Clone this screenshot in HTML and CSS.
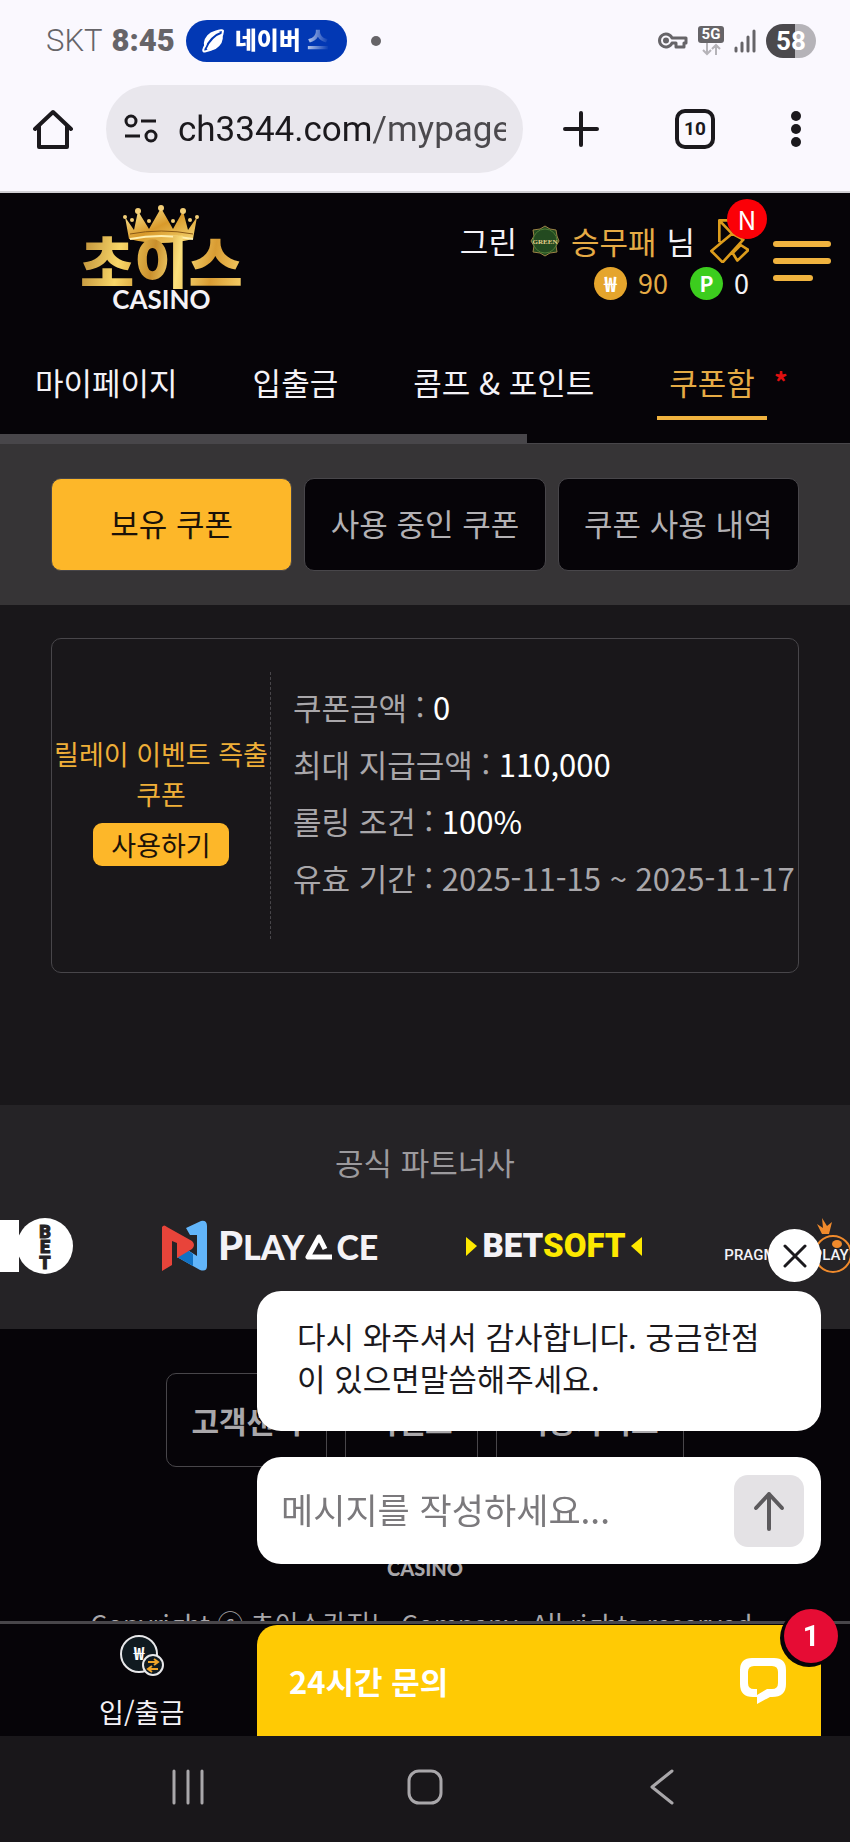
FILE: index.html
```html
<!DOCTYPE html>
<html lang="ko">
<head>
  <meta charset="UTF-8" />
  <meta name="viewport" content="width=device-width, initial-scale=1.0"/>
  <title>초이스 카지노 - 쿠폰함</title>
  <link rel="stylesheet" href="styles.css">
</head>
<body>
  <!-- Phone status + browser toolbar -->
  <div class="browser">
    <div class="status-bar">
      <span class="carrier">SKT</span>
      <span class="clock">8:45</span>
      <span class="now-pill">
        <svg width="24" height="24" viewBox="0 0 24 24">
          <ellipse cx="12.500" cy="12" rx="11" ry="8" transform="rotate(-48 12 12)" fill="#fff"/>
          <path d="M4 21C7 13 13 6 22 3" fill="none" stroke="#0238b4" stroke-width="2"/>
          <path d="M5 15Q0 23 4 22.500Q9 22 14 18M14 3Q22 0 22 2Q22 6 19 10" fill="none" stroke="#fff" stroke-width="2"/>
        </svg>
        <span class="now-text">네이버 스</span>
      </span>
      <span class="notice-dot"></span>
      <div class="status-icons">
        <svg width="30" height="20" viewBox="0 0 30 20" fill="none" stroke="#666468" stroke-width="3">
          <path d="M14 7H28V12H26V16H18V12H14A6.500 6.500 0 1 1 14 7Z" stroke-linejoin="round"/>
          <circle cx="8" cy="9.500" r="1.500"/>
        </svg>
        <span class="network">
          <b>5G</b>
          <svg width="20" height="13" viewBox="0 0 20 13" fill="none" stroke="#b5b3b8" stroke-width="2">
            <path d="M6 0V11M2 7L6 11L10 7M15 12V2M11 6L15 2L19 6"/>
          </svg>
        </span>
        <svg width="22" height="24" viewBox="0 0 22 24" stroke="#666468" stroke-width="3" stroke-linecap="round">
          <path d="M2 22V19M8 22V14M14 22V8M20 22V2"/>
        </svg>
        <span class="battery">58</span>
      </div>
    </div>

    <div class="toolbar">
      <button class="icon-btn" aria-label="홈">
        <svg width="40" height="40" viewBox="0 0 40 40" fill="none" stroke="#1b191d" stroke-width="4" stroke-linejoin="round" stroke-linecap="round">
          <path d="M2 20L20 3L38 20M6 17V38H34V17"/>
        </svg>
      </button>
      <div class="address">
        <svg width="34" height="30" viewBox="0 0 34 30" fill="none" stroke="#1b191d" stroke-width="3">
          <circle cx="7" cy="7" r="5"/><path d="M17 7H32M1 22H16"/><circle cx="27" cy="22" r="5"/>
        </svg>
        <input class="url" type="text" aria-label="주소" value="ch3344.com/mypage" readonly>
      </div>
      <div class="toolbar-actions">
        <button class="icon-btn" aria-label="새 탭">
          <svg width="36" height="36" viewBox="0 0 36 36" stroke="#1b191d" stroke-width="4" stroke-linecap="round">
            <path d="M18 2V34M2 18H34"/>
          </svg>
        </button>
        <button class="icon-btn tab-count">10</button>
        <button class="icon-btn" aria-label="메뉴">
          <svg width="10" height="36" viewBox="0 0 10 36" fill="#1b191d">
            <circle cx="5" cy="5" r="5"/><circle cx="5" cy="18" r="5"/><circle cx="5" cy="31" r="5"/>
          </svg>
        </button>
      </div>
    </div>
  </div>

  <!-- Site header -->
  <header class="header">
    <div class="header-top">
      <a class="logo" href="#">
        <svg class="crown" width="76" height="38" viewBox="0 0 76 38">
          <defs>
            <linearGradient id="gold" x1="0" y1="0" x2="1" y2="1">
              <stop offset="0" stop-color="#fff0a0"/>
              <stop offset="0.500" stop-color="#d99a2b"/>
              <stop offset="1" stop-color="#f8dc7a"/>
            </linearGradient>
          </defs>
          <path d="M6 34L2 12L11 25L15 6L26 24L38 3L50 24L60 6L65 25L74 12L70 34Q38 42 6 34Z" fill="url(#gold)"/>
          <g fill="#f3cf78">
            <circle cx="2" cy="12" r="2"/><circle cx="15" cy="6" r="3"/><circle cx="38" cy="3" r="3"/><circle cx="60" cy="6" r="3"/><circle cx="74" cy="12" r="2"/>
            <circle cx="9" cy="15" r="2"/><circle cx="26" cy="16" r="2"/><circle cx="50" cy="16" r="2"/><circle cx="67" cy="15" r="2"/>
          </g>
          <path d="M7 29Q38 23 70 29" fill="none" stroke="#8a5a16" stroke-width="1"/>
          <path d="M7 34Q38 28 70 34" fill="none" stroke="#fff0b0" stroke-width="2"/>
        </svg>
        <span class="logo-name">초이스</span>
        <span class="logo-sub">CASINO</span>
      </a>

      <div class="user">
        <div class="user-row">
          <span>그린</span>
          <svg class="level" width="30" height="32" viewBox="0 0 30 32">
            <path d="M15 1L20 4L26 5L27 11L29 16L26 21L27 27L20 28L15 31L10 28L3 27L4 21L1 16L4 11L3 5L10 4Z" fill="#234a20" stroke="#9b8345" stroke-width="1"/>
            <circle cx="15" cy="16" r="12" fill="none" stroke="#4f7c35" stroke-width="1"/>
            <text x="15" y="19" text-anchor="middle" font-family="Liberation Serif, serif" font-size="7" font-weight="bold" fill="#e6cf8c">GREEN</text>
          </svg>
          <span class="gold">승무패</span>
          <span class="nim">님</span>
          <a class="coupon-link" href="#" aria-label="쿠폰">
            <svg width="39" height="44" viewBox="0 0 117 132" fill="none" stroke="#dc9c1c" stroke-width="8" stroke-linejoin="round">
              <path d="M28 70V4H62L102 50M28 4L66 44M66 44L4 96L38 130L100 62ZM68 102L92 78L115 93L82 125Z"/>
            </svg>
            <span class="new-badge">N</span>
          </a>
        </div>
        <div class="user-row balance">
          <i class="coin">₩</i><span class="gold">90</span>
          <i class="coin point">P</i><span>0</span>
        </div>
      </div>

      <button class="hamburger" aria-label="전체 메뉴"><span></span><span></span><span></span></button>
    </div>

    <nav class="main-nav">
      <a href="#">마이페이지</a>
      <a href="#">입출금</a>
      <a href="#">콤프 &amp; 포인트</a>
      <a href="#" class="active">쿠폰함<sup>*</sup></a>
    </nav>
    <div class="nav-scroll"></div>
  </header>

  <main>
    <div class="tabs">
      <button class="tab active">보유 쿠폰</button>
      <button class="tab">사용 중인 쿠폰</button>
      <button class="tab">쿠폰 사용 내역</button>
    </div>

    <section class="coupons">
      <div class="coupon">
        <div class="coupon-side">
          <p>릴레이 이벤트 즉출 쿠폰</p>
          <button class="use-btn">사용하기</button>
        </div>
        <ul class="coupon-info">
          <li>쿠폰금액 : <b>0</b></li>
          <li>최대 지급금액 : <b>110,000</b></li>
          <li>롤링 조건 : <b>100%</b></li>
          <li>유효 기간 : 2025-11-15 ~ 2025-11-17</li>
        </ul>
      </div>
    </section>

    <!-- Partners -->
    <section class="partners">
      <h2>공식 파트너사</h2>
      <div class="partner-row">
        <svg width="74" height="56" viewBox="0 0 74 56">
          <path d="M0 2H19V54H0Z" fill="#fff"/>
          <circle cx="45" cy="28" r="28" fill="#fff"/>
          <g fill="#252326" stroke="#252326" stroke-width="1" font-family="Roboto, sans-serif" font-size="18" font-weight="900" text-anchor="middle">
            <text x="45" y="20">B</text><text x="45" y="35">E</text><text x="45" y="51">T</text>
          </g>
        </svg>
        <div class="playace">
          <svg width="46" height="52" viewBox="0 0 46 52">
            <path d="M24 8L39 1Q45 0 45 6V46Q45 52 38 50L15 37L24 29L35 36V15L28 15Z" fill="#62b5fa"/>
            <path d="M15 37L24 29L31 34V46Z" fill="#1272c4"/>
            <path d="M0 7Q2 4 5 7L30 21Q34 25 30 29L15 38V23L10 21V45L0 51Z" fill="#e8443a"/>
          </svg>
          <span><big>P</big>LAY<svg width="32" height="28" viewBox="0 0 32 28"><path d="M21 17L15 5L4 25H28" fill="none" stroke="#fff" stroke-width="5" stroke-linejoin="round"/></svg>CE</span>
        </div>
        <div class="betsoft">
          <svg width="11" height="19" viewBox="0 0 11 19"><path d="M0 0L11 9L0 19Z" fill="#fde800"/></svg>
          <span>BET<em>SOFT</em></span>
          <svg width="11" height="19" viewBox="0 0 11 19"><path d="M11 0L0 9L11 19Z" fill="#fde800"/></svg>
        </div>
        <div class="pragmatic">
          <svg width="38" height="56" viewBox="0 0 38 56">
            <circle cx="19" cy="36" r="18" fill="none" stroke="#f08a2c" stroke-width="2"/>
            <ellipse cx="23" cy="26" rx="5" ry="4" fill="#f08a2c"/>
            <path d="M8 16L3 6L9 10L8 0L13 8L18 4L15 16Z" fill="#f08a2c"/>
          </svg>
          <span>PRAGMATIC PLAY</span>
        </div>
      </div>
    </section>
  </main>

  <footer class="footer">
    <div class="footer-links">
      <a href="#">고객센터</a>
      <a href="#">이벤트</a>
      <a href="#">이용가이드</a>
    </div>
    <div class="footer-logo">CASINO</div>
    <p>Copyright ⓒ 초이스카지노 Company. All rights reserved.</p>
  </footer>

  <!-- Fixed bottom -->
  <div class="bottom">
    <nav class="bottom-bar">
      <a href="#">
        <svg width="44" height="43" viewBox="0 0 44 43">
          <circle cx="19" cy="20" r="18" fill="#101a20" stroke="#e8e8ea" stroke-width="2"/>
          <text x="19" y="26" text-anchor="middle" font-family="Noto Sans CJK KR, sans-serif" font-size="18" font-weight="bold" fill="#fff">₩</text>
          <circle cx="33" cy="31" r="10" fill="#101a20" stroke="#e8e8ea" stroke-width="2"/>
          <path d="M28 28H37M34 25L38 28L34 31M38 35H29M32 32L28 35L32 38" fill="none" stroke="#efa52a" stroke-width="2"/>
        </svg>
        입/출금
      </a>
    </nav>
    <div class="system-nav">
      <button aria-label="최근 앱">
        <svg width="34" height="36" viewBox="0 0 34 36" stroke="#a9a7aa" stroke-width="3" stroke-linecap="round"><path d="M3 2V34M17 2V34M31 2V34"/></svg>
      </button>
      <button aria-label="홈 화면">
        <svg width="36" height="36" viewBox="0 0 36 36" fill="none" stroke="#a9a7aa" stroke-width="3"><rect x="2" y="2" width="32" height="32" rx="10"/></svg>
      </button>
      <button aria-label="뒤로">
        <svg width="24" height="36" viewBox="0 0 24 36" fill="none" stroke="#a9a7aa" stroke-width="3" stroke-linecap="round" stroke-linejoin="round"><path d="M22 2L2 18L22 34"/></svg>
      </button>
    </div>
  </div>

  <!-- Chat widget -->
  <div class="chat">
    <button class="chat-close" aria-label="닫기">
      <svg width="24" height="24" viewBox="0 0 24 24" stroke="#1b191d" stroke-width="3" stroke-linecap="round"><path d="M2 2L22 22M22 2L2 22"/></svg>
    </button>
    <div class="chat-message">다시 와주셔서 감사합니다. 궁금한점이 있으면말씀해주세요.</div>
    <form class="chat-form">
      <input type="text" placeholder="메시지를 작성하세요..." aria-label="메시지">
      <button type="button" class="send-btn" aria-label="보내기">
        <svg width="32" height="40" viewBox="0 0 32 40" fill="none" stroke="#5c5a5d" stroke-width="4" stroke-linecap="round" stroke-linejoin="round"><path d="M16 38V3M3 17L16 3L29 17"/></svg>
      </button>
    </form>
    <button class="chat-open">
      24시간 문의
      <svg width="48" height="46" viewBox="0 0 48 46">
        <path d="M13 0H35Q47 0 47 12V26Q47 39 33 39H31L18 46V39H14Q1 39 1 26V12Q1 0 13 0ZM15 8Q9 8 9 14V25Q9 31 15 31H18V37L28 31H33Q39 31 39 25V14Q39 8 33 8Z" fill="#fff" fill-rule="evenodd"/>
      </svg>
      <span class="chat-count">1</span>
    </button>
  </div>
</body>
</html>
```
FILE: styles.css
```css
/* ==========================
   BASE
=========================== */
* {
  box-sizing: border-box;
}

body {
  margin: 0;
  min-height: 100vh;
  display: flex;
  flex-direction: column;
  overflow-x: hidden;
  background-color: #060408;
  color: #f4f2f6;
  font-family: "Noto Sans CJK KR", sans-serif;
  font-size: 31px;
}

button,
input {
  font-family: inherit;
  font-size: inherit;
  border: none;
  padding: 0;
}

button {
  cursor: pointer;
  background: none;
}

a {
  color: inherit;
  text-decoration: none;
}

svg {
  display: block;
  flex-shrink: 0;
}

/* ==========================
   STATUS BAR & TOOLBAR
=========================== */
.browser {
  height: 193px;
  background-color: #faf8fe;
  border-bottom: 2px solid #d0ced3;
  font-family: Roboto, "Noto Sans CJK KR", sans-serif;
}

.status-bar {
  display: flex;
  align-items: center;
  height: 81px;
  padding: 0 34px 0 46px;
  color: #666468;
  font-size: 31px;
}

.carrier {
  font-weight: 300;
  margin-right: 9px;
}

.clock {
  font-weight: 900;
}

.now-pill {
  display: flex;
  align-items: center;
  gap: 10px;
  height: 42px;
  padding: 0 18px 0 15px;
  margin-left: 11px;
  border-radius: 21px;
  background-color: #0238b4;
}

.now-text {
  font-size: 24px;
  font-weight: 900;
  line-height: 42px;
  color: transparent;
  background: linear-gradient(to right, #fff 68%, #0238b4);
  background-clip: text;
  -webkit-background-clip: text;
}

.notice-dot {
  width: 10px;
  height: 10px;
  margin-left: 24px;
  border-radius: 50%;
  background-color: #666468;
}

.status-icons {
  display: flex;
  align-items: center;
  gap: 10px;
  margin-left: auto;
}

.network {
  display: flex;
  flex-direction: column;
  align-items: center;
}

.network b {
  width: 26px;
  border-radius: 3px;
  background-color: #666468;
  color: #fff;
  font-size: 15px;
  line-height: 17px;
  text-align: center;
}

.battery {
  width: 50px;
  border-radius: 17px;
  background: linear-gradient(to right, #4b494d 58%, #b5b3b8 58%);
  color: #fff;
  font-size: 26px;
  font-weight: bold;
  line-height: 34px;
  text-align: center;
}

.toolbar {
  display: flex;
  align-items: center;
  padding: 4px 49px 0 33px;
}

.icon-btn {
  display: flex;
}

.address {
  display: flex;
  flex: 1;
  align-items: center;
  gap: 20px;
  min-width: 0;
  height: 88px;
  margin: 0 40px 0 33px;
  padding: 0 17px 0 18px;
  border-radius: 44px;
  background-color: #e9e7ed;
}

.toolbar-actions {
  display: flex;
  align-items: center;
  gap: 76px;
}

.url {
  flex: 1;
  min-width: 0;
  height: 60px;
  font-size: 35px;
  color: transparent;
  background: linear-gradient(to right, #1b191d 196px, #4b494d 196px);
  background-clip: text;
  -webkit-background-clip: text;
  outline: none;
}

.tab-count {
  justify-content: center;
  width: 40px;
  height: 40px;
  border: 4px solid #1b191d;
  border-radius: 10px;
  color: #1b191d;
  font-size: 19px;
  font-weight: bold;
  line-height: 32px;
}

/* ==========================
   HEADER
=========================== */
.header-top {
  display: flex;
  height: 159px;
  padding: 12px 19px 0 80px;
}

.logo {
  display: flex;
  flex-direction: column;
  align-items: center;
}

.logo-name {
  margin-top: -10px;
  font-size: 59px;
  font-weight: 900;
  line-height: 56px;
  color: transparent;
  background: linear-gradient(100deg, #b98a35, #f9d768 25%, #c98f2c 45%, #fbe07c 60%, #d99c33 80%, #f6cf68);
  background-clip: text;
  -webkit-background-clip: text;
}

.logo-sub {
  font-family: Lato, sans-serif;
  font-size: 26px;
  font-weight: bold;
  line-height: 20px;
}

.user {
  margin: 15px 24px 0 auto;
}

.user-row {
  display: flex;
  align-items: center;
  justify-content: flex-end;
  height: 42px;
  font-size: 31px;
  line-height: 40px;
}

.gold {
  color: #e5ab45;
}

.level {
  margin: 0 11px 0 13px;
}

.nim {
  margin: 0 15px 0 10px;
}

.coupon-link {
  position: relative;
}

.new-badge {
  position: absolute;
  top: -20px;
  right: -18px;
  width: 40px;
  border-radius: 50%;
  background-color: #fb0007;
  color: #fff;
  font-size: 26px;
  line-height: 40px;
  text-align: center;
}

.balance {
  font-size: 27px;
}

.coin {
  width: 33px;
  margin-right: 11px;
  border-radius: 50%;
  background-color: #e5a52c;
  color: #fff;
  font-size: 21px;
  font-style: normal;
  font-weight: bold;
  line-height: 33px;
  text-align: center;
}

.point {
  margin-left: 22px;
  background-color: #3ccd1e;
}

.hamburger {
  display: flex;
  flex-direction: column;
  gap: 11px;
  width: 58px;
  padding-top: 36px;
}

.hamburger span {
  width: 100%;
  height: 6px;
  border-radius: 3px;
  background-color: #f0b33f;
}

.hamburger span:last-child {
  width: 40px;
}

.main-nav {
  display: flex;
  gap: 51px;
  padding: 0 23px 14px;
  white-space: nowrap;
}

.main-nav a {
  position: relative;
  padding: 0 12px 4px;
  border-bottom: 4px solid transparent;
  line-height: 60px;
}

.main-nav .active {
  color: #e5ab45;
  border-color: #f0b33f;
}

.main-nav sup {
  position: absolute;
  top: 0;
  right: -21px;
  color: #e01010;
  font-size: 27px;
  font-weight: bold;
  line-height: 60px;
}

.nav-scroll {
  width: 62%;
  height: 9px;
  background-color: #48464a;
}

/* ==========================
   TABS
=========================== */
.tabs {
  display: grid;
  grid-template-columns: repeat(3, 1fr);
  gap: 12px;
  padding: 34px 51px;
  background-color: #363436;
  border-top: 1px solid #48464a;
}

.tab {
  height: 93px;
  padding-bottom: 4px;
  border: 1px solid #48464a;
  border-radius: 10px;
  background-color: #060408;
  color: #b3b1b4;
}

.tab.active {
  background-color: #fdb729;
  color: #1b1208;
}

/* ==========================
   COUPON CARD
=========================== */
.coupons {
  padding: 33px 51px 132px;
  background-color: #19171a;
}

.coupon {
  display: flex;
  min-height: 335px;
  padding: 33px 0;
  border: 1px solid #48464a;
  border-radius: 10px;
}

.coupon-side {
  display: flex;
  flex-direction: column;
  align-items: center;
  justify-content: center;
  width: 219px;
  padding-bottom: 12px;
  border-right: 1px dashed #48464a;
}

.coupon-side p {
  margin: 0 0 9px;
  color: #efaf38;
  font-size: 27px;
  line-height: 40px;
  text-align: center;
  word-break: keep-all;
}

.use-btn {
  width: 136px;
  height: 43px;
  border-radius: 9px;
  background-color: #fdb729;
  color: #1b1208;
  font-size: 27px;
  line-height: 43px;
}

.coupon-info {
  margin: 0;
  padding: 6px 0 0 22px;
  list-style: none;
  line-height: 57px;
  color: #a9a7aa;
  white-space: nowrap;
}

.coupon-info b {
  color: #fff;
  font-weight: normal;
}

/* ==========================
   PARTNERS
=========================== */
.partners {
  height: 224px;
  padding-top: 35px;
  background-color: #252326;
  overflow: hidden;
}

.partners h2 {
  margin: 0;
  color: #9c9a9d;
  font-size: 31px;
  font-weight: normal;
  line-height: 44px;
  text-align: center;
}

.partner-row {
  display: flex;
  align-items: center;
  gap: 88px;
  margin-top: 34px;
  white-space: nowrap;
}

.playace,
.betsoft {
  display: flex;
  align-items: center;
}

.playace {
  gap: 10px;
}

.playace span {
  display: flex;
  align-items: baseline;
  font-family: Lato, sans-serif;
  font-size: 34px;
  font-weight: 900;
  line-height: 40px;
}

.playace big {
  font-size: 40px;
}

.betsoft {
  gap: 5px;
}

.betsoft span {
  font-family: Roboto, sans-serif;
  font-size: 33px;
  font-weight: 900;
  line-height: 56px;
}

.betsoft em {
  color: #fde800;
  font-style: normal;
}

.pragmatic {
  position: relative;
  width: 122px;
  flex-shrink: 0;
}

.pragmatic svg {
  margin-left: auto;
}

.pragmatic span {
  position: absolute;
  top: 27px;
  right: 3px;
  font-family: Roboto, sans-serif;
  font-size: 15px;
  font-weight: 500;
  line-height: 20px;
}

/* ==========================
   FOOTER
=========================== */
.footer {
  flex: 1;
  padding: 44px 0 180px;
  color: #a9a7aa;
  text-align: center;
}

.footer-links {
  display: flex;
  justify-content: center;
  gap: 18px;
}

.footer-links a {
  padding: 0 24px;
  border: 1px solid #48464a;
  border-radius: 10px;
  font-size: 30px;
  font-weight: bold;
  line-height: 92px;
}

.footer-logo {
  margin-top: 89px;
  font-family: Lato, sans-serif;
  font-size: 20px;
  font-weight: 900;
  line-height: 24px;
}

.footer p {
  margin: 21px 0 0;
  font-size: 26px;
  line-height: 44px;
  white-space: nowrap;
}

/* ==========================
   BOTTOM BAR
=========================== */
.bottom {
  position: fixed;
  right: 0;
  bottom: 0;
  left: 0;
}

.bottom-bar {
  display: grid;
  grid-template-columns: repeat(3, 1fr);
  height: 115px;
  border-top: 3px solid #48464a;
  background-color: #060408;
}

.bottom-bar a {
  display: flex;
  flex-direction: column;
  align-items: center;
  gap: 15px;
  padding-top: 10px;
  font-size: 27px;
  line-height: 40px;
}

.system-nav {
  display: flex;
  align-items: center;
  justify-content: space-between;
  height: 106px;
  padding: 0 170px 4px;
  background-color: #19171a;
}

.system-nav button {
  display: flex;
  justify-content: center;
  width: 36px;
}

/* ==========================
   CHAT WIDGET
=========================== */
.chat {
  position: fixed;
  right: 29px;
  bottom: 106px;
  display: flex;
  flex-direction: column;
  width: 564px;
  color: #1b191d;
}

.chat-close {
  display: flex;
  align-items: center;
  justify-content: center;
  align-self: flex-end;
  width: 53px;
  height: 53px;
  margin-bottom: 9px;
  border-radius: 50%;
  background-color: #fff;
}

.chat-message {
  height: 140px;
  padding: 24px 40px;
  border-radius: 24px;
  background-color: #fff;
  line-height: 42px;
}

.chat-form {
  display: flex;
  align-items: center;
  height: 107px;
  margin: 26px 0 61px;
  padding: 0 17px 0 24px;
  border-radius: 24px;
  background-color: #fff;
}

.chat-form input {
  flex: 1;
  min-width: 0;
  height: 60px;
  padding-bottom: 4px;
  background: none;
  font-size: 35px;
  outline: none;
}

.chat-form input::placeholder {
  color: #7b797c;
}

.send-btn {
  display: flex;
  align-items: center;
  justify-content: center;
  width: 70px;
  height: 72px;
  border-radius: 14px;
  background-color: #e4e2e5;
}

.chat-open {
  position: relative;
  display: flex;
  align-items: center;
  justify-content: space-between;
  height: 111px;
  padding: 0 34px 0 32px;
  border-radius: 20px 20px 0 0;
  background-color: #ffca04;
  color: #fff;
  font-weight: bold;
}

.chat-count {
  position: absolute;
  top: -16px;
  right: -17px;
  width: 54px;
  border-radius: 50%;
  background-color: #e60c34;
  box-shadow: -2px 2px 0 2px #060408;
  font-family: Roboto, sans-serif;
  font-size: 29px;
  line-height: 54px;
  text-align: center;
}
```
